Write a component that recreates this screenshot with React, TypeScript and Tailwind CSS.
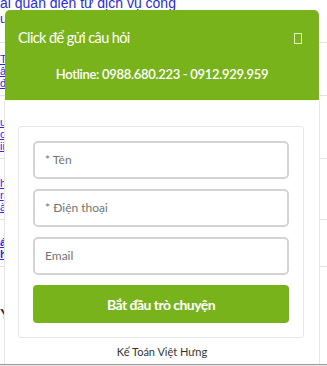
import React from "react";

const lato = { fontFamily: "Lato, 'Noto Sans', sans-serif" };

function BgItem({ lines, bold }: { lines: string[]; bold?: boolean }) {
  return (
    <div className="border-b border-[#e2e2e2] py-[6px]">
      {lines.map((l, i) => (
        <div
          key={i}
          className={`text-[11px] leading-[12px] text-[#2a2ae0] underline whitespace-nowrap ${bold ? "font-bold" : ""}`}
        >
          {l}
        </div>
      ))}
    </div>
  );
}

export default function App() {
  return (
    <div
      className="relative w-[327px] h-[366px] overflow-hidden bg-white"
      style={{ fontFamily: "'Liberation Sans', Arial, sans-serif" }}
    >
      {/* background page */}
      <div className="flex flex-col">
        <div className="text-[14px] leading-[14px] text-[#2a2ae0] -mt-[4px] whitespace-nowrap">
          ai quản điện tử dịch vụ công
        </div>
        <div className="text-[13px] leading-[14px] text-[#2a2ae0] mt-[2px] pb-[16px] border-b border-[#e2e2e2] whitespace-nowrap">
          u
        </div>
        <div className="h-[4px]" />
        <BgItem lines={["Thủ tục", "âm", "đăng"]} />
        <div className="h-[14px]" />
        <BgItem lines={["u", "c", "ii"]} />
        <div className="h-[12px]" />
        <BgItem lines={["h", "r", "à"]} />
        <div className="h-[10px]" />
        <BgItem lines={["á", "h"]} bold />
        <div className="mt-[36px] text-[15px] font-bold text-[#333]">Ý</div>
      </div>

      {/* chat widget overlay */}
      <div className="absolute left-[4px] top-[10px] w-[316px]" style={lato}>
        <div className="mx-[1px] bg-[#79b31c] rounded-t-[5px] h-[90px] flex flex-col text-white">
          <div className="flex items-center justify-between pl-[13px] pr-[17px] pt-[18px] h-[38px]">
            <span className="text-[14.5px] leading-[20px] tracking-[-0.6px]">Click để gửi câu hỏi</span>
            <span className="w-[8px] h-[11px] border-[1.5px] border-[#dff0c4]" />
          </div>
          <div className="mt-[17px] text-center text-[13px] leading-[18px] font-semibold tracking-[-0.3px]">
            Hotline: 0988.680.223 - 0912.929.959
          </div>
        </div>
        <div className="h-[1px] bg-[#f6f6dc] mx-[1px]" />
        <div className="border-x border-[#e6e6e6] bg-white pt-[25px] h-[300px]">
          <div className="ml-[13px] w-[286px] border border-[#e8e8e8] rounded-[3px] px-[14px] pt-[14px] pb-[14px] flex flex-col gap-[10px]">
            {["* Tên", "* Điện thoại", "Email"].map((p) => (
              <div
                key={p}
                className="h-[38px] border-2 border-[#d4d4d4] rounded-[5px] flex items-center pl-[10px] text-[12px] text-[#747474]"
              >
                {p}
              </div>
            ))}
            <div className="h-[38px] bg-[#79b31c] rounded-[4px] flex items-center justify-center text-white font-bold text-[14px] tracking-[-0.55px]">
              Bắt đầu trò chuyện
            </div>
          </div>
          <div className="mt-[7px] text-center text-[11px] leading-[14px] text-[#333]">
            Kế Toán Việt Hưng
          </div>
        </div>
      </div>

      <div className="absolute left-0 right-0 top-[364px] h-[1px] bg-[#9a9a9a]" />
      <div className="absolute left-0 right-0 top-[365px] h-[1px] bg-[#e8e8e8]" />
    </div>
  );
}
